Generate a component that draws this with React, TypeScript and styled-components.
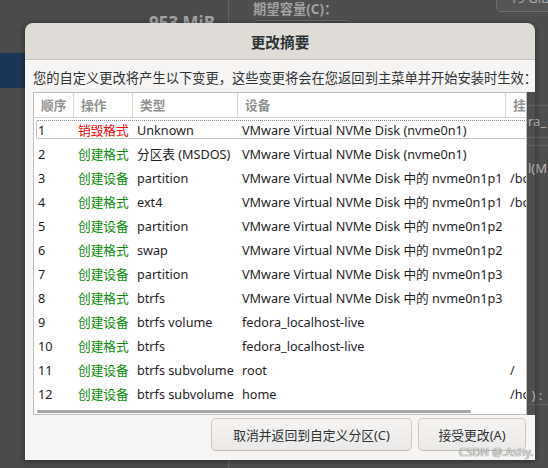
import React from 'react';
import styled, { createGlobalStyle } from 'styled-components';

const FONT = `"Noto Sans", "Noto Sans CJK SC", sans-serif`;

const Global = createGlobalStyle`
  html, body { margin: 0; padding: 0; background: #4c4c4c; }
  body { font-family: ${FONT}; }
`;

const Screen = styled.div`
  position: relative;
  width: 548px;
  height: 468px;
  overflow: hidden;
  display: flex;
  background: #4c4c4c;
  font-family: ${FONT};
`;

const LeftPane = styled.div`
  width: 228px;
  flex: none;
  border-right: 1px solid #636363;
  display: flex;
  flex-direction: column;
  background: #4b4b4b;
`;

const SizeText = styled.div`
  margin-top: 12px;
  padding-right: 13px;
  text-align: right;
  font-size: 17px;
  font-weight: 700;
  line-height: 22px;
  color: #a2a2a2;
`;

const SelectedRow = styled.div`
  margin-top: 19px;
  height: 35px;
  background: #1b3658;
`;

const RightPane = styled.div`
  flex: 1;
  min-width: 0;
  display: flex;
  flex-direction: column;
  background: #4f4f4f;
`;

const TopRow = styled.div`
  display: flex;
  justify-content: space-between;
  align-items: flex-start;
`;

const FieldLabel = styled.div`
  margin: 1px 0 0 24px;
  font-size: 13.33px;
  font-weight: 700;
  line-height: 16px;
  color: #a0a0a0;
`;

const GhostButton = styled.div`
  margin: -13px -12px 0 0;
  width: 64px;
  height: 25px;
  box-sizing: border-box;
  border: 1px solid #6e6e6e;
  border-radius: 5px;
  background: #555;
  color: #a8a8a8;
  font-size: 13px;
  line-height: 20px;
  padding-left: 13px;
  white-space: nowrap;
  overflow: hidden;
`;

const FieldInput = styled.div`
  margin: 3px 0 0 24px;
  width: 97px;
  height: 24px;
  box-sizing: border-box;
  border: 1px solid #6a6a6a;
  border-radius: 5px;
  background: #484848;
`;

const FarColumn = styled.div`
  align-self: flex-end;
  width: 20px;
  display: flex;
  flex-direction: column;
`;

const FarCell = styled.div<{ $h: number; $line?: boolean }>`
  height: ${(p) => p.$h}px;
  border-bottom: ${(p) => (p.$line ? '1px solid #626262' : 'none')};
  font-size: 13px;
  line-height: ${(p) => p.$h}px;
  color: #b4b4b4;
  white-space: nowrap;
  overflow: hidden;
`;

const Dialog = styled.div`
  position: absolute;
  left: 25px;
  top: 23px;
  width: 510px;
  height: 437px;
  display: flex;
  flex-direction: column;
  border-radius: 8px 8px 0 0;
  box-shadow: 0 1px 6px rgba(0, 0, 0, 0.45);
`;

const DialogHeader = styled.div`
  height: 36px;
  flex: none;
  background: #dfdcd8;
  border-bottom: 1px solid #c5c1bc;
  border-radius: 8px 8px 0 0;
  display: flex;
  align-items: center;
  justify-content: center;
  font-size: 14.67px;
  font-weight: 700;
  color: #2e3436;
`;

const Intro = styled.div`
  height: 32px;
  flex: none;
  box-sizing: border-box;
  padding: 8px 0 0 8px;
  background: #f6f5f4;
  font-size: 13.27px;
  line-height: 20px;
  color: #2e3436;
  white-space: nowrap;
`;

const TableBand = styled.div`
  height: 323px;
  flex: none;
  display: flex;
`;

const Gutter = styled.div`
  width: 8px;
  flex: none;
  background: #f6f5f4;
`;

const TableBox = styled.div`
  width: 494px;
  flex: none;
  box-sizing: border-box;
  border: 1px solid #c2bdb8;
  background: #fff;
  overflow: hidden;
  display: flex;
  flex-direction: column;
`;

const TableInner = styled.div`
  width: 580px;
`;

const COLS = '40px 59px 105px 268px 108px';

const HeaderRow = styled.div`
  display: grid;
  grid-template-columns: ${COLS};
  height: 24px;
  border-bottom: 1px solid #d6d2ce;
`;

const HeaderCell = styled.div<{ $last?: boolean }>`
  box-sizing: border-box;
  border-right: ${(p) => (p.$last ? 'none' : '1px solid #dcd8d4')};
  padding-left: 7px;
  font-size: 12.67px;
  font-weight: 700;
  line-height: 24px;
  color: #919391;
  white-space: nowrap;
`;

const Row = styled.div<{ $focused?: boolean }>`
  position: relative;
  display: grid;
  grid-template-columns: ${COLS};
  height: 24px;
  align-items: center;
  &::after {
    content: '';
    display: ${(p) => (p.$focused ? 'block' : 'none')};
    position: absolute;
    left: 2px;
    right: 0;
    top: 2px;
    bottom: 3px;
    border: 1px dotted #8a8a8a;
    border-radius: 2px;
    pointer-events: none;
  }
`;

const Cell = styled.div<{ $tone?: 'red' | 'green' }>`
  padding-left: 4px;
  font-size: 12.67px;
  line-height: 24px;
  white-space: nowrap;
  overflow: hidden;
  color: ${(p) => (p.$tone === 'red' ? '#ff0000' : p.$tone === 'green' ? '#0a8a0a' : '#1e1e1e')};
`;

const ScrollThumb = styled.div`
  margin: 4px 0 0 3px;
  width: 434px;
  height: 3px;
  border-radius: 2px;
  background: #a6a6a6;
`;

const Strip = styled.div`
  flex: 1;
`;

const Footer = styled.div`
  flex: 1;
  background: #f6f5f4;
  display: flex;
  justify-content: flex-end;
  align-items: flex-start;
  gap: 6px;
  padding: 3px 9px 0 0;
`;

const Button = styled.button<{ $w: number }>`
  width: ${(p) => p.$w}px;
  height: 33px;
  box-sizing: border-box;
  border: 1px solid #cdc7c2;
  border-bottom-color: #bfb8b1;
  border-radius: 5px;
  background: linear-gradient(#f5f4f3, #ebe9e7);
  font-family: ${FONT};
  font-size: 12.8px;
  color: #2e3436;
  padding: 0;
`;

const Watermark = styled.div`
  position: absolute;
  left: 459px;
  top: 445px;
  font-size: 11px;
  line-height: 14px;
  color: #e2e2e2;
  text-shadow: 0 0 1px #6e6e6e, 0 0 1px #6e6e6e;
  letter-spacing: 0.2px;
`;

type Tone = 'red' | 'green';
const DISK = 'VMware Virtual NVMe Disk';
const rows: [string, string, Tone, string, string, string][] = [
  ['1', '销毁格式', 'red', 'Unknown', `${DISK} (nvme0n1)`, ''],
  ['2', '创建格式', 'green', '分区表 (MSDOS)', `${DISK} (nvme0n1)`, ''],
  ['3', '创建设备', 'green', 'partition', `${DISK} 中的 nvme0n1p1`, '/boot'],
  ['4', '创建格式', 'green', 'ext4', `${DISK} 中的 nvme0n1p1`, '/boot'],
  ['5', '创建设备', 'green', 'partition', `${DISK} 中的 nvme0n1p2`, ''],
  ['6', '创建格式', 'green', 'swap', `${DISK} 中的 nvme0n1p2`, ''],
  ['7', '创建设备', 'green', 'partition', `${DISK} 中的 nvme0n1p3`, ''],
  ['8', '创建格式', 'green', 'btrfs', `${DISK} 中的 nvme0n1p3`, ''],
  ['9', '创建设备', 'green', 'btrfs volume', 'fedora_localhost-live', ''],
  ['10', '创建格式', 'green', 'btrfs', 'fedora_localhost-live', ''],
  ['11', '创建设备', 'green', 'btrfs subvolume', 'root', '/'],
  ['12', '创建设备', 'green', 'btrfs subvolume', 'home', '/home'],
];

const headers = ['顺序', '操作', '类型', '设备', '挂载点'];

export default function App() {
  return (
    <Screen>
      <Global />
      <LeftPane>
        <SizeText>953 MiB</SizeText>
        <SelectedRow />
      </LeftPane>
      <RightPane>
        <TopRow>
          <FieldLabel>期望容量(C)：</FieldLabel>
          <GhostButton>19 GiB(</GhostButton>
        </TopRow>
        <FieldInput />
        <FarColumn>
          <FarCell $h={61} $line />
          <FarCell $h={31} $line>ra_</FarCell>
          <FarCell $h={7} $line />
          <FarCell $h={45}>l(M</FarCell>
          <FarCell $h={196} />
          <FarCell $h={17} $line>&nbsp;) :</FarCell>
        </FarColumn>
      </RightPane>

      <Dialog>
        <DialogHeader>更改摘要</DialogHeader>
        <Intro>您的自定义更改将产生以下变更，这些变更将会在您返回到主菜单并开始安装时生效：</Intro>
        <TableBand>
          <Gutter />
          <TableBox>
            <TableInner>
              <HeaderRow>
                {headers.map((h, i) => (
                  <HeaderCell key={h} $last={i === headers.length - 1}>
                    {h}
                  </HeaderCell>
                ))}
              </HeaderRow>
              {rows.map(([n, action, tone, type, device, mount], i) => (
                <Row key={n} $focused={i === 0}>
                  <Cell>{n}</Cell>
                  <Cell $tone={tone}>{action}</Cell>
                  <Cell>{type}</Cell>
                  <Cell>{device}</Cell>
                  <Cell>{mount}</Cell>
                </Row>
              ))}
            </TableInner>
            <ScrollThumb />
          </TableBox>
          <Strip />
        </TableBand>
        <Footer>
          <Button $w={201}>取消并返回到自定义分区(C)</Button>
          <Button $w={108}>接受更改(A)</Button>
        </Footer>
      </Dialog>
      <Watermark>CSDN @.Ashy.</Watermark>
    </Screen>
  );
}
